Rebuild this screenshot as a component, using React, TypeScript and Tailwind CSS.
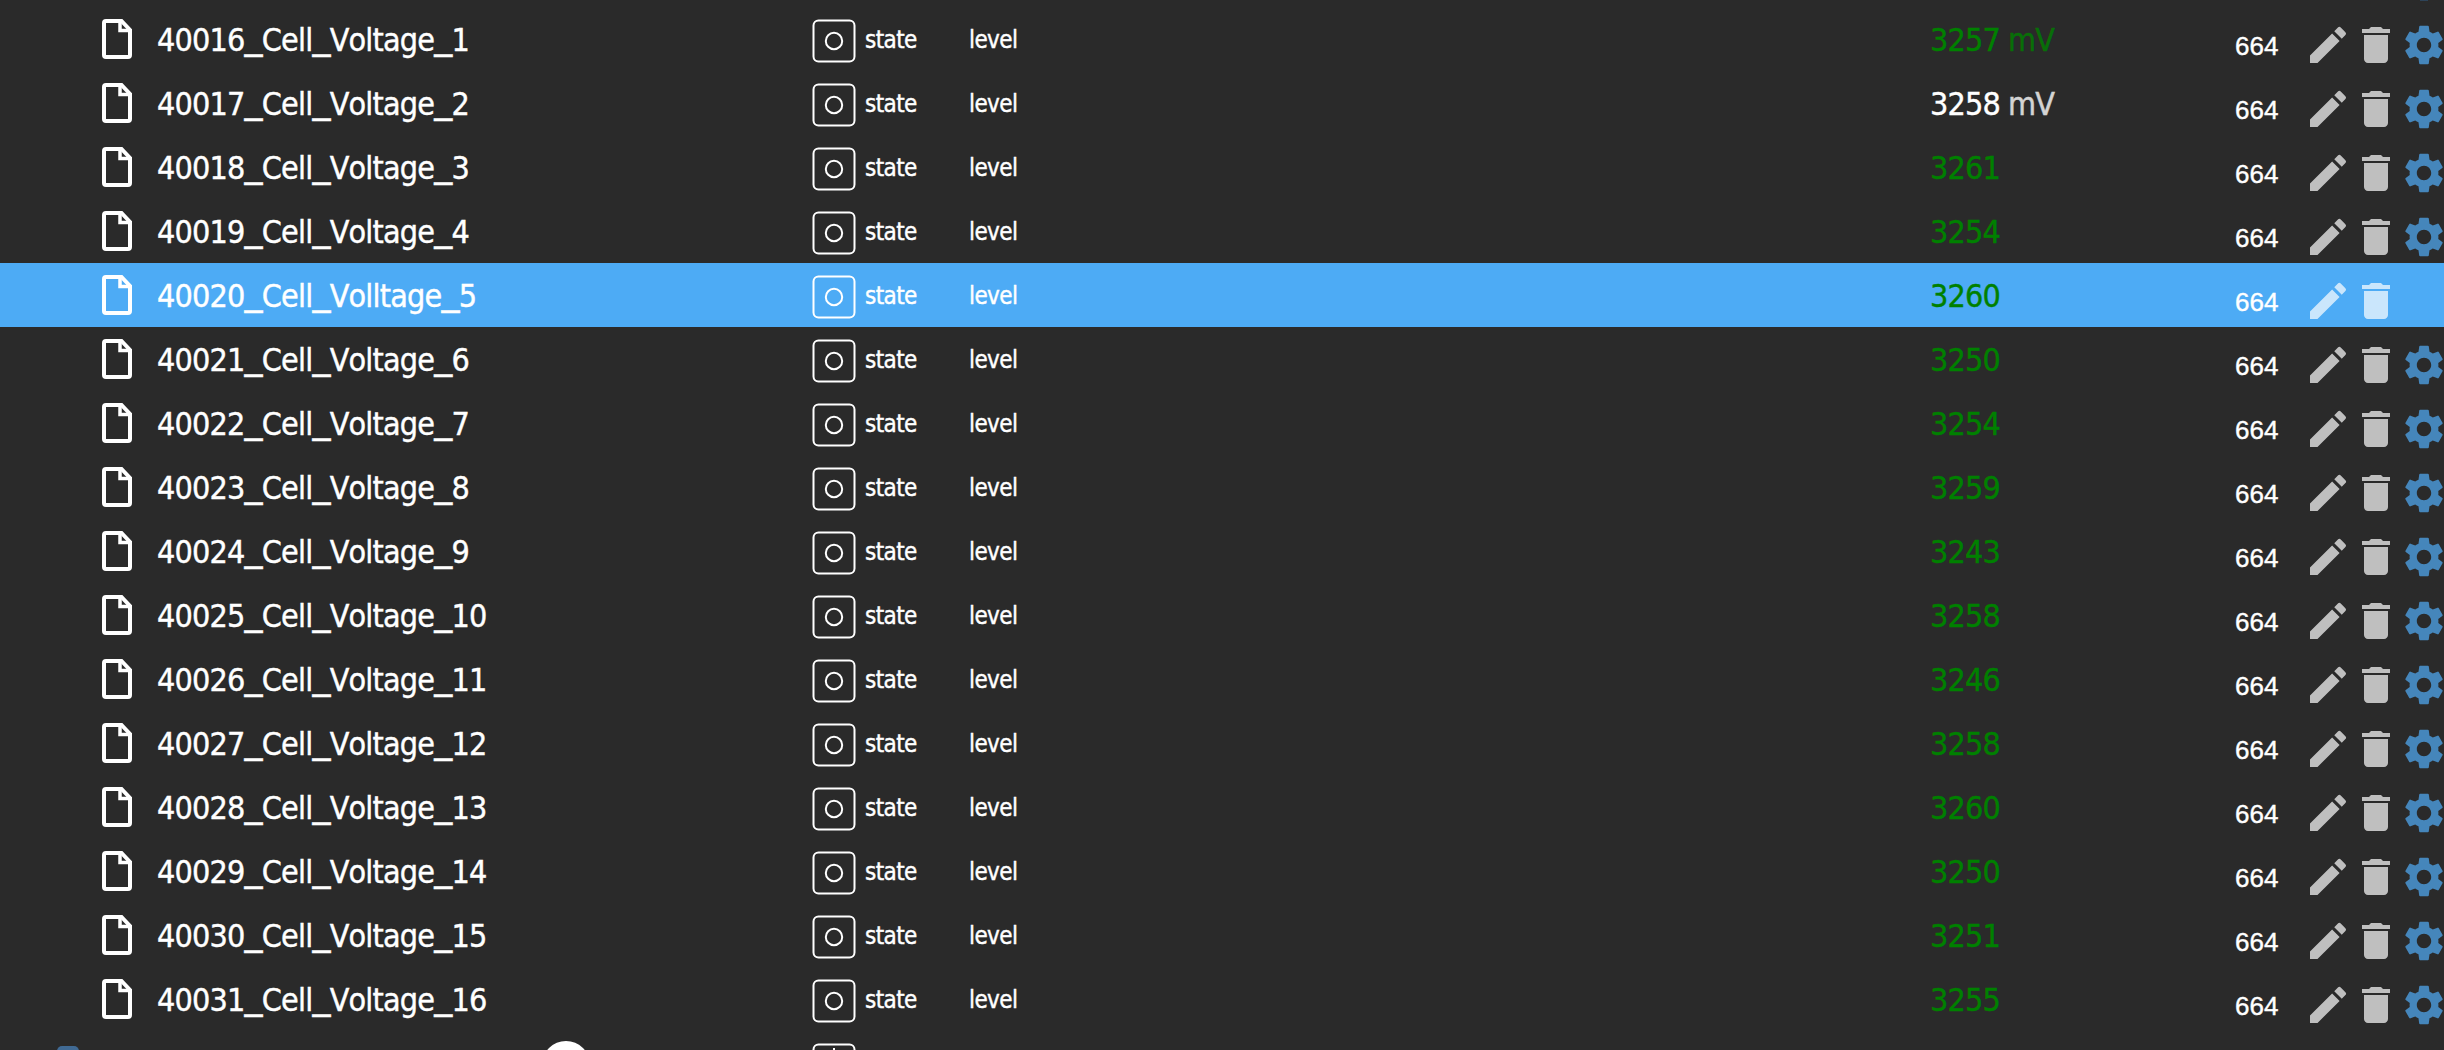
import { Fragment } from 'react';
import { MdDelete, MdEdit, MdSettings } from 'react-icons/md';

interface StateObject {
  id: string;
  value: number;
  unit?: string;
  unacked?: boolean;
  selected?: boolean;
}

const objects: StateObject[] = [
  { id: '40016_Cell_Voltage_1', value: 3257, unit: 'mV' },
  { id: '40017_Cell_Voltage_2', value: 3258, unit: 'mV', unacked: true },
  { id: '40018_Cell_Voltage_3', value: 3261 },
  { id: '40019_Cell_Voltage_4', value: 3254 },
  { id: '40020_Cell_Volltage_5', value: 3260, selected: true },
  { id: '40021_Cell_Voltage_6', value: 3250 },
  { id: '40022_Cell_Voltage_7', value: 3254 },
  { id: '40023_Cell_Voltage_8', value: 3259 },
  { id: '40024_Cell_Voltage_9', value: 3243 },
  { id: '40025_Cell_Voltage_10', value: 3258 },
  { id: '40026_Cell_Voltage_11', value: 3246 },
  { id: '40027_Cell_Voltage_12', value: 3258 },
  { id: '40028_Cell_Voltage_13', value: 3260 },
  { id: '40029_Cell_Voltage_14', value: 3250 },
  { id: '40030_Cell_Voltage_15', value: 3251 },
  { id: '40031_Cell_Voltage_16', value: 3255 },
];

function FileIcon() {
  return (
    <svg className="w-[30px] h-10 mr-[25px] shrink-0" viewBox="0 0 30 40" fill="none" stroke="currentColor" strokeWidth="4">
      <path d="M4 2H19.5L28 11V36a2 2 0 0 1-2 2H4a2 2 0 0 1-2-2V4a2 2 0 0 1 2-2Z" />
      <path d="M18 2V11.5H28" strokeWidth="3.5" />
    </svg>
  );
}

function StateIcon() {
  return (
    <svg className="w-11 h-11 shrink-0" viewBox="0 0 44 44" fill="none" stroke="currentColor" strokeWidth="2">
      <rect x="1.5" y="1.5" width="41" height="41" rx="5" />
      <circle cx="22" cy="22" r="8.2" />
    </svg>
  );
}

// the condensed face has narrow underscores, so they are set wider than the words
function ObjectName({ id }: { id: string }) {
  return (
    <span className="text-[32px] leading-[44px] -mt-px tracking-[-0.8px] whitespace-nowrap [font-kerning:none]">
      {id.split('_').map((part, i) => (
        <Fragment key={i}>
          {i > 0 && <span className="font-['DejaVu_Sans',sans-serif] [font-stretch:normal] text-[36px] leading-none align-[2px]">_</span>}
          {part}
        </Fragment>
      ))}
    </span>
  );
}

function ObjectRow({ item }: { item: StateObject }) {
  const valueColor = item.unacked ? 'text-white' : 'text-[#008000]';

  return (
    <div className={`flex h-16 shrink-0 text-white ${item.selected ? 'bg-[#4dabf5]' : ''}`}>
      <div className="w-[811px] shrink-0 flex pl-[102px] pt-3">
        <FileIcon />
        <ObjectName id={item.id} />
      </div>
      <div className="w-[158px] shrink-0 flex pl-px pt-3">
        <StateIcon />
        <span className="ml-[9px] pt-px text-2xl leading-[40px] tracking-[-0.6px]">state</span>
      </div>
      <div className="w-[961px] shrink-0 pt-[13px] text-2xl leading-[40px] tracking-[-0.6px]">level</div>
      <div className={`w-[305px] shrink-0 pt-[11px] text-[32px] leading-[44px] tracking-[-0.8px] ${valueColor}`}>
        {item.value}
        {item.unit && <span className="opacity-80 ml-2">{item.unit}</span>}
      </div>
      <div className="w-[69px] shrink-0 pt-[18px] font-['Liberation_Sans',sans-serif] text-[26px] leading-[42px]">664</div>
      <div className="flex pt-3.5">
        <MdEdit className="size-12 opacity-70" />
        <MdDelete className="size-12 opacity-70" />
        {!item.selected && <MdSettings className="size-12 text-[#4586bb]" />}
      </div>
    </div>
  );
}

export default function App() {
  return (
    <div className="w-[2444px] h-[1050px] overflow-hidden bg-[#2a2a2a] font-['DejaVu_Sans_Condensed','DejaVu_Sans',sans-serif] [font-stretch:condensed] [-webkit-text-stroke:0.4px_currentColor]">
      {/* tail of the row scrolled off the top */}
      <div className="h-[7px] overflow-hidden flex justify-end">
        <div className="w-2 h-px mr-4 bg-[#2d4358]" />
      </div>
      {objects.map((item) => (
        <ObjectRow key={item.id} item={item} />
      ))}
      {/* next row, cut by the viewport */}
      <div className="flex h-[19px] overflow-hidden text-white">
        <div className="w-[57px] shrink-0" />
        <div className="w-[485px] shrink-0 pt-[15px]">
          <div className="w-[22px] h-8 rounded-[5px] bg-[#406a94]" />
        </div>
        <div className="w-[270px] shrink-0 pt-[10px]">
          <div className="size-12 rounded-full bg-white" />
        </div>
        <div className="pt-3">
          <svg className="w-11 h-11" viewBox="0 0 44 44" fill="none" stroke="currentColor" strokeWidth="2">
            <rect x="1.5" y="1.5" width="41" height="41" rx="5" />
            <path d="M22 5V14" />
          </svg>
        </div>
      </div>
    </div>
  );
}
